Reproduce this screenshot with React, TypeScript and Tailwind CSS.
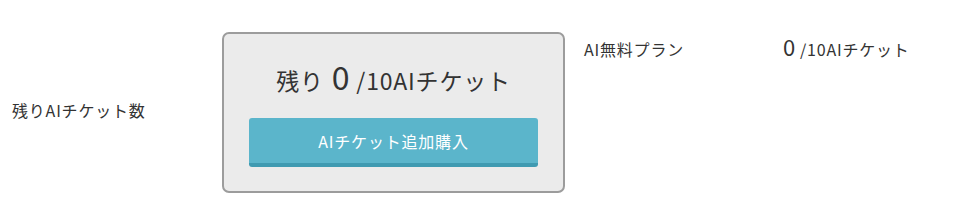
export default function App() {
  return (
    <div
      className="flex h-[222px] w-[973px] items-start bg-white pt-[32px] text-[#333]"
      style={{ fontFamily: '"Noto Sans CJK JP", "Noto Sans", sans-serif' }}
    >
      <div className="flex h-[161px] w-[222px] items-center pb-[6px] pl-[12px] text-[16px] tracking-[0.8px]">
        残りAIチケット数
      </div>

      <div className="flex h-[161px] w-[343px] flex-col items-center rounded-[7px] border-2 border-[#9c9c9c] bg-[#ebebeb] px-[25px] pt-[22px]">
        <div className="flex items-baseline text-[23px] leading-[40px] tracking-[0.8px] text-[#333]">
          <span>残り</span>
          <span className="ml-[8px] mr-[6px] text-[32px]">0</span>
          <span>/10AIチケット</span>
        </div>
        <button className="mt-[18px] flex h-[49px] w-full items-center justify-center rounded-[3px] border-b-[4px] border-[#3f9ab1] bg-[#5bb5cb] text-[16px] tracking-[0.8px] text-white">
          AIチケット追加購入
        </button>
      </div>

      <div className="flex w-[408px] items-baseline pl-[19px] pt-[4px] text-[16px] leading-[20px] tracking-[0.8px]">
        <span className="w-[199px]">AI無料プラン</span>
        <span className="text-[22px]">0</span>
        <span className="ml-[4px]">/10AIチケット</span>
      </div>
    </div>
  );
}
